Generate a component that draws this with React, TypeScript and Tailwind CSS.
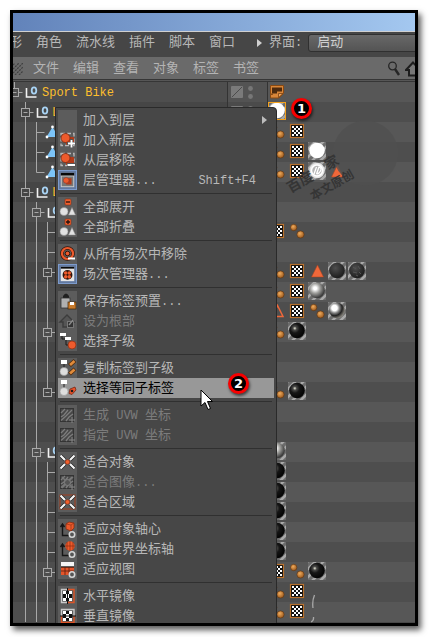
import type { ReactNode } from "react";
import clsx from "clsx";

type IconName =
  | "none" | "layerAdd" | "layerRemove" | "layerManager" | "unfold" | "fold"
  | "takeRemove" | "takeManager" | "preset" | "root" | "children" | "copyTag"
  | "selectTag" | "uvw" | "fitObject" | "fitImage" | "fitRegion" | "axis"
  | "world" | "view" | "mirrorH" | "mirrorV";

type MenuItem = {
  label: string;
  icon: IconName;
  shortcut?: string;
  submenu?: boolean;
  disabled?: boolean;
  active?: boolean;
  framed?: boolean;
};

const menuGroups: MenuItem[][] = [
  [
    { label: "加入到层", icon: "none", submenu: true },
    { label: "加入新层", icon: "layerAdd" },
    { label: "从层移除", icon: "layerRemove" },
    { label: "层管理器...", icon: "layerManager", shortcut: "Shift+F4", framed: true },
  ],
  [
    { label: "全部展开", icon: "unfold" },
    { label: "全部折叠", icon: "fold" },
  ],
  [
    { label: "从所有场次中移除", icon: "takeRemove" },
    { label: "场次管理器...", icon: "takeManager", framed: true },
  ],
  [
    { label: "保存标签预置...", icon: "preset" },
    { label: "设为根部", icon: "root", disabled: true },
    { label: "选择子级", icon: "children" },
  ],
  [
    { label: "复制标签到子级", icon: "copyTag" },
    { label: "选择等同子标签", icon: "selectTag", active: true },
  ],
  [
    { label: "生成 UVW 坐标", icon: "uvw", disabled: true },
    { label: "指定 UVW 坐标", icon: "uvw", disabled: true },
  ],
  [
    { label: "适合对象", icon: "fitObject" },
    { label: "适合图像...", icon: "fitImage", disabled: true },
    { label: "适合区域", icon: "fitRegion" },
  ],
  [
    { label: "适应对象轴心", icon: "axis" },
    { label: "适应世界坐标轴", icon: "world" },
    { label: "适应视图", icon: "view" },
  ],
  [
    { label: "水平镜像", icon: "mirrorH" },
    { label: "垂直镜像", icon: "mirrorV" },
  ],
];

type TagName =
  | "note" | "selected" | "dots" | "checker" | "white" | "ring" | "tri"
  | "triOutline" | "dark" | "rough" | "silver" | "chrome" | "black";

// guides: one character per level. | line, t branch, l last branch, + open node, ^ last node
type TreeRow = { guides: string; kind?: "null" | "poly"; name?: string; tags?: TagName[] };

const rows: TreeRow[] = [
  { guides: "^", kind: "null", name: "Sport Bike", tags: ["note"] },
  { guides: " +", kind: "null", name: "L", tags: ["selected"] },
  { guides: " |t", kind: "poly", tags: ["dots", "checker"] },
  { guides: " |t", kind: "poly", tags: ["dots", "checker", "white"] },
  { guides: " |l", kind: "poly", tags: ["dots", "checker", "ring", "tri"] },
  { guides: " +", kind: "null", name: "L" },
  { guides: " |+", kind: "null" },
  { guides: " ||t", tags: ["checker", "dots"] },
  { guides: " ||t" },
  { guides: " ||+", tags: ["dots", "checker", "tri", "dark", "rough"] },
  { guides: " |||", tags: ["dots", "checker", "silver"] },
  { guides: " |||", tags: ["triOutline", "checker", "dots", "chrome"] },
  { guides: " ||+", tags: ["dots", "black"] },
  { guides: " |||" },
  { guides: " |||" },
  { guides: " ||^", tags: ["dots", "black"] },
  { guides: " ||" },
  { guides: " ||" },
  { guides: " |+", kind: "null", tags: ["silver"] },
  { guides: " ||t", tags: ["black"] },
  { guides: " ||t", tags: ["black"] },
  { guides: " ||t", tags: ["black"] },
  { guides: " ||t", tags: ["black"] },
  { guides: " ||t", tags: ["black"] },
  { guides: " ||+", tags: ["checker", "dots", "black"] },
  { guides: " |||", tags: ["dots", "checker"] },
  { guides: " |||", tags: ["dots", "checker"] },
];

// Latin runs sit one size below the Chinese glyphs
function Mixed({ text }: { text: string }) {
  return (
    <>
      {text.split(/([\x20-\x7e]+)/).map((part, i) =>
        i % 2 ? <span key={i} className="text-[12px]">{part}</span> : part,
      )}
    </>
  );
}

function Guides({ row }: { row: TreeRow }) {
  const last = row.guides.length - 1;
  const nodeX = 1.5 + last * 11;
  const ix = nodeX + (row.kind === "poly" ? 9 : 11);
  const width = 29 + last * 10;
  return (
    <svg width={width} height="20" className="shrink-0 overflow-visible" fill="none" stroke="#a8a8a8">
      {row.guides.split("").map((g, level) => {
        const x = 1.5 + level * 11;
        switch (g) {
          case "|":
            return <path key={level} d={`M${x} 0V20`} />;
          case "t":
            return <path key={level} d={`M${x} 0V20M${x} 10.5H${x + 8}`} />;
          case "l":
            return <path key={level} d={`M${x} 0V10.5H${x + 8}`} />;
          case "+":
          case "^":
            return (
              <g key={level}>
                <path d={`M${x} 0V6M${x + 4} 10.5H${x + 8}M${x - 2} 10.5H${x + 2}`} />
                {g === "+" && <path d={`M${x} 15V20`} />}
                <rect x={x - 4} y="6.5" width="8" height="8" />
              </g>
            );
          default:
            return null;
        }
      })}
      {row.kind === "null" && (
        <g>
          <path d={`M${ix + 1} 6V15H${ix + 11}`} stroke="#f2f2f2" strokeWidth="1.6" />
          <ellipse cx={ix + 8.5} cy="8.5" rx="2.3" ry="3.2" stroke="#a9d4f5" strokeWidth="1.8" />
        </g>
      )}
      {row.kind === "poly" && (
        <g stroke="none">
          <path d={`M${ix + 7} 5L${ix + 13} 15H${ix + 1}Z`} fill="#7cc4f8" />
          <circle cx={ix + 7} cy="5" r="1.4" fill="#fff" />
          <circle cx={ix + 1.5} cy="15" r="1.4" fill="#fff" />
        </g>
      )}
    </svg>
  );
}

const ballFill: Record<string, string> = {
  white: "#fff", selected: "#fff", ring: "#e6e6e6", dark: "url(#ballDark)",
  rough: "url(#ballDark)", silver: "url(#ballSilver)", chrome: "url(#ballChrome)", black: "url(#ballBlack)",
};

function Tag({ name }: { name: TagName }) {
  let art: ReactNode;
  switch (name) {
    case "note":
      art = (
        <g>
          <path d="M3.5 3.5H16.5V11.5L12 16H3.500V12.500H5.500V12H3.500Z" fill="#d98639" stroke="#8a4a12" />
          <path d="M5 5.500H15V9.500H10V11.500H5Z" fill="#4d2a0e" />
          <path d="M11.500 15.500V11.500H16Z" stroke="#7a4313" strokeWidth="0.800" fill="#f0a35a" />
        </g>
      );
      break;
    case "dots":
      art = (
        <g fill="url(#dot)" stroke="#5a3310" strokeWidth="0.6">
          <circle cx="6.7" cy="5.5" r="3.2" />
          <circle cx="13.5" cy="12.5" r="3.6" />
        </g>
      );
      break;
    case "checker":
      art = (
        <g>
          <rect x="3.5" y="2.500" width="13" height="13" fill="#111" stroke="#b9722e" strokeWidth="1.2" />
          <path
            d="M5 4h2v2h-2zM9 4h2v2h-2zM13 4h2v2h-2zM7 6h2v2h-2zM11 6h2v2h-2zM5 8h2v2h-2zM9 8h2v2h-2zM13 8h2v2h-2zM7 10h2v2h-2zM11 10h2v2h-2zM5 12h2v2h-2zM9 12h2v2h-2zM13 12h2v2h-2z"
            fill="#fff"
          />
        </g>
      );
      break;
    case "tri":
      art = <path d="M10.5 3L16.5 15H4.5Z" fill="#f0683a" stroke="#a8401c" strokeWidth="0.5" />;
      break;
    case "triOutline":
      art = <path d="M10.5 3.5L16 14.5H5Z" fill="none" stroke="#f0683a" strokeWidth="1.5" />;
      break;
    default:
      art = (
        <g>
          <rect x="1" y="0" width="18" height="18" fill="url(#hatch)" />
          <circle cx="10" cy="8.5" r="7.8" fill={ballFill[name]} />
          {name === "ring" && <circle cx="10" cy="8.5" r="5.5" fill="#b5b5b5" stroke="#fff" strokeWidth="1.5" />}
          {name === "ring" && <path d="M7 12L9.5 5M9.500 12L12 5Q15 6 13.500 9Q12.500 11.500 9.500 12" stroke="#fff" strokeWidth="1.300" fill="none" />}
          {name === "rough" && <path d="M6 5l3 2M11 4l2 3M6 10l4 1M12 10l2 2M9 13l2 1" stroke="#555" fill="none" />}
          {name === "selected" && <rect x="1.5" y="0.5" width="17" height="17" fill="none" stroke="#f5a21b" />}
        </g>
      );
  }
  return <svg width="20" height="20" className="shrink-0">{art}</svg>;
}

function Gradients() {
  return (
    <svg className="absolute size-0" aria-hidden="true">
      <defs>
        <pattern id="hatch" width="8" height="8" patternUnits="userSpaceOnUse">
          <rect width="8" height="8" fill="#6c6c6c" />
          <path d="M-2 10L10 -2M-2 2L2 -2M6 10L10 6" stroke="#a9a9a9" strokeWidth="2.6" />
        </pattern>
        <radialGradient id="dot" cx="0.4" cy="0.35" r="0.65">
          <stop offset="0" stopColor="#f0ab5c" />
          <stop offset="1" stopColor="#9c5a1e" />
        </radialGradient>
        <radialGradient id="ballDark" cx="0.4" cy="0.35" r="0.65">
          <stop offset="0" stopColor="#4e4e4e" />
          <stop offset="1" stopColor="#1c1c1c" />
        </radialGradient>
        <radialGradient id="ballSilver" cx="0.38" cy="0.36" r="0.62">
          <stop offset="0.15" stopColor="#fff" />
          <stop offset="0.5" stopColor="#a2a29f" />
          <stop offset="1" stopColor="#3b3b3b" />
        </radialGradient>
        <radialGradient id="ballChrome" cx="0.34" cy="0.34" r="0.7">
          <stop offset="0.25" stopColor="#fff" />
          <stop offset="0.45" stopColor="#8a8a8a" />
          <stop offset="0.7" stopColor="#222" />
          <stop offset="1" stopColor="#8a877f" />
        </radialGradient>
        <radialGradient id="ballBlack" cx="0.36" cy="0.36" r="0.6">
          <stop offset="0" stopColor="#e8e8d8" />
          <stop offset="0.2" stopColor="#4a4a48" />
          <stop offset="0.5" stopColor="#161616" />
          <stop offset="1" stopColor="#060606" />
        </radialGradient>
      </defs>
    </svg>
  );
}

const layerBase = (
  <g>
    <path d="M3 3.5H16V15.5H3Z" fill="none" stroke="#b9b9b9" strokeWidth="1.3" strokeDasharray="4 2" />
    <rect x="8" y="7" width="8" height="8" rx="1" fill="#b33a18" />
    <circle cx="7.5" cy="8" r="4.5" fill="#ec5a2c" stroke="#7a2a12" strokeWidth="0.8" />
  </g>
);

const shapes = (
  <g fill="#e2e2e2" stroke="#8d8d8d" strokeWidth="0.5">
    <circle cx="6" cy="14.5" r="4" />
    <path d="M14 10.5L17.5 18H10.5Z" />
  </g>
);

const tagSource = (
  <g>
    <rect x="3" y="2" width="6" height="4" fill="#fff" />
    <path d="M6 6V10" stroke="#222" />
    <circle cx="6" cy="13.5" r="4" fill="#dedede" stroke="#9a9a9a" strokeWidth="0.6" />
  </g>
);

const uvwArt = (
  <g>
    <rect x="2.5" y="3.5" width="13" height="13" fill="#484848" stroke="#343434" />
    <path d="M3 8L7 4M3 12L6 10L10 5M3 15.500L8 11L14 5M8 16L11 12L15 9" stroke="#7d7d7d" strokeWidth="1.3" fill="none" />
    <path d="M14 12V18M11 15H17" stroke="#858585" />
  </g>
);

const fitArrows = (
  <g>
    <path d="M2.5 3.5L7 8M16.5 3.5L12 8M2.5 16.5L7 12M16.5 16.5L12 12" stroke="#202020" strokeWidth="3.4" />
    <path d="M2.5 3.5L7 8M16.5 3.5L12 8M2.5 16.5L7 12M16.5 16.5L12 12" stroke="#f4f4f4" strokeWidth="2.2" />
    <circle cx="9.5" cy="10" r="2.3" fill="#f2602d" stroke="#8b2c10" strokeWidth="0.6" />
  </g>
);

const axisArrows = (
  <path d="M4.5 5V16.5H13M2.5 8L4.5 5L6.5 8" stroke="#161616" strokeWidth="1.4" fill="none" />
);

const gear = <circle cx="14" cy="15.5" r="2.7" fill="#555" stroke="#d4d4d4" strokeWidth="1.6" />;

const mirrorChecks = (
  <g>
    <rect x="5" y="5" width="9" height="10" fill="#111" />
    <path d="M5 5h3v3h-3zM11 5h3v3h-3zM8 8h3v4h-3zM5 12h3v3h-3zM11 12h3v3h-3z" fill="#fff" />
  </g>
);

const menuIcons: Record<IconName, ReactNode> = {
  none: null,
  layerAdd: (
    <g>
      {layerBase}
      <path d="M13.5 9V18M9 13.5H18" stroke="#555" strokeWidth="3" />
      <path d="M13.5 10V17.5M10 13.5H17" stroke="#fff" strokeWidth="1.8" />
    </g>
  ),
  layerRemove: (
    <g>
      {layerBase}
      <path d="M9 15H18" stroke="#555" strokeWidth="4" />
      <path d="M9.5 15H17" stroke="#fff" strokeWidth="2" />
    </g>
  ),
  layerManager: (
    <g>
      <rect x="2" y="2" width="15" height="16" fill="#d0d0d0" />
      <rect x="3" y="6" width="13" height="11" fill="#777" />
      <rect x="2" y="2" width="15" height="3" fill="#080808" />
      <rect x="8" y="8" width="6" height="7" fill="#b33a18" />
      <circle cx="8" cy="10.5" r="3.2" fill="#ec5a2c" stroke="#773333" strokeWidth="0.6" />
    </g>
  ),
  unfold: (
    <g>
      {shapes}
      <rect x="7" y="2" width="6" height="6" rx="1" fill="#f06130" stroke="#8c2d10" strokeWidth="0.6" />
      <path d="M8 5H12" stroke="#27100a" strokeWidth="1.3" />
    </g>
  ),
  fold: (
    <g>
      {shapes}
      <rect x="7" y="2" width="6" height="6" rx="1" fill="#f06130" stroke="#8c2d10" strokeWidth="0.6" />
      <path d="M8 5H12M10 3V7" stroke="#27100a" strokeWidth="1.3" />
    </g>
  ),
  takeRemove: (
    <g>
      <circle cx="9.5" cy="9.5" r="5.5" fill="none" stroke="#35150b" strokeWidth="3.6" />
      <circle cx="9.5" cy="9.5" r="5.5" fill="none" stroke="#ec5a2c" strokeWidth="2.2" />
      <circle cx="9.5" cy="9.5" r="2.3" fill="#ec5a2c" stroke="#35150b" />
      <path d="M10 14.5H17" stroke="#fff" strokeWidth="2" />
    </g>
  ),
  takeManager: (
    <g>
      <rect x="2" y="2" width="15" height="16" fill="#e4e4e4" />
      <rect x="2" y="2" width="15" height="2" fill="#080808" />
      <circle cx="9.5" cy="11" r="5.5" fill="#30130b" />
      <g fill="#ec5a2c">
        <circle cx="7.5" cy="8.8" r="2" />
        <circle cx="11.5" cy="8.8" r="2" />
        <circle cx="7.5" cy="13.2" r="2" />
        <circle cx="11.5" cy="13.2" r="2" />
      </g>
    </g>
  ),
  preset: (
    <g>
      <path d="M5 5Q8 0 11 5V8H5Z" fill="#202020" />
      <rect x="3" y="7" width="9" height="10" fill="#b0b0b0" stroke="#333" strokeWidth="0.8" />
      <rect x="10" y="11" width="8" height="7" fill="#c77a2c" stroke="#402508" strokeWidth="0.7" />
      <rect x="12" y="11" width="4" height="3" fill="#fff" />
    </g>
  ),
  root: (
    <g>
      <path d="M2 11L9 4L16 11H13V16H5V11Z" fill="#555" stroke="#3c3c3c" strokeWidth="1.4" />
      <rect x="9.5" y="10.5" width="6" height="6" fill="#333" stroke="#777" />
      <path d="M11 14L15 9" stroke="#8c8c8c" strokeWidth="1.3" />
    </g>
  ),
  children: (
    <g>
      <path d="M4 5V8H8V14H11" stroke="#1b1b1b" fill="none" />
      <rect x="2" y="2" width="6" height="3" fill="#fff" />
      <rect x="7" y="6" width="6" height="3" fill="#fff" />
      <circle cx="14" cy="14" r="4" fill="#ee5b2d" stroke="#8c2d10" strokeWidth="0.7" />
    </g>
  ),
  copyTag: (
    <g>
      {tagSource}
      <path d="M11.5 7.5L17 2.5M11.5 16L17 11" stroke="#4d2a0e" strokeWidth="4.2" />
      <path d="M12 7L16.5 3M12 15.5L16.5 11.5" stroke="#e08b3b" strokeWidth="2.8" />
    </g>
  ),
  selectTag: (
    <g>
      {tagSource}
      <path d="M11 15.5L12 11L17 9L18 12L14 16.5Z" fill="#e9532a" stroke="#6b1e0c" strokeWidth="0.7" />
      <circle cx="14" cy="13" r="1.3" fill="#1c1c1c" />
    </g>
  ),
  uvw: uvwArt,
  fitObject: fitArrows,
  fitImage: (
    <g>
      {uvwArt}
      <path d="M4 5L15 16M15 5L4 16" stroke="#767676" strokeWidth="1.5" />
      <circle cx="9.5" cy="10.5" r="3" fill="#555" stroke="#808080" />
    </g>
  ),
  fitRegion: (
    <g>
      <rect x="2" y="3" width="15" height="14" fill="none" stroke="#a33c1c" />
      {fitArrows}
    </g>
  ),
  axis: (
    <g>
      {axisArrows}
      <path d="M8 5L11 3L16 4V9L13 12L8 10Z" fill="#ec5a2c" stroke="#8c2d10" strokeWidth="0.8" />
      <path d="M8 5L13 6L16 4M13 6V12" stroke="#8c2d10" strokeWidth="0.6" fill="none" />
      {gear}
    </g>
  ),
  world: (
    <g>
      {axisArrows}
      <circle cx="12" cy="7" r="4.7" fill="#ec5a2c" />
      <path d="M7 7H17M12 2V12M9 3V11M15 3V11" stroke="#8c2d10" strokeWidth="0.7" />
      {gear}
    </g>
  ),
  view: (
    <g>
      <rect x="3" y="3" width="13" height="4" fill="#f4f4f4" />
      <rect x="3" y="8" width="13" height="8" fill="#e4552a" />
      <path d="M3 8.5H16M3 12H16M7 8V16M11 8V16" stroke="#56200f" strokeWidth="0.8" />
      {gear}
    </g>
  ),
  mirrorH: (
    <g>
      <path d="M9 3.5H3.5V16.5H9" fill="none" stroke="#c9c9c9" strokeWidth="1.4" />
      <path d="M10 3.5H16V16.5H10" fill="none" stroke="#df5426" strokeWidth="1.4" />
      {mirrorChecks}
      <path d="M9.5 2V18" stroke="#111" />
    </g>
  ),
  mirrorV: (
    <g>
      <path d="M3.5 10V3.5H16V10" fill="none" stroke="#c9c9c9" strokeWidth="1.4" />
      <path d="M3.5 10V16.5H16V10" fill="none" stroke="#df5426" strokeWidth="1.4" />
      {mirrorChecks}
      <path d="M2 10H18" stroke="#111" />
    </g>
  ),
};

function ContextMenu() {
  return (
    <div
      role="menu"
      className="absolute top-[94px] left-[42px] w-[222px] rounded-tr-sm border border-[#2a2a2a] bg-[#474747] px-px pt-[2px]"
    >
      {menuGroups.map((group, gi) => (
        <div key={gi} role="group">
          {gi > 0 && <hr className="mx-[3px] my-[3px] h-px border-0 bg-[#303030]" />}
          {group.map((item, i) => (
            <button
              key={i}
              type="button"
              role="menuitem"
              disabled={item.disabled}
              className={clsx(
                "mx-px flex h-5 w-[216px] items-center text-left text-[13px] leading-5 whitespace-nowrap",
                item.active ? "bg-[#989898] text-black" : item.disabled ? "text-[#7c7c7c]" : "text-[#b8b8b8]",
              )}
            >
              <span
                className={clsx(
                  "h-5 w-[19px] shrink-0",
                  item.framed ? "border border-[#7d9bcc] bg-[#6279a0]" : !item.active && "bg-[#5c5c5c]",
                )}
              >
                <svg viewBox="0 0 19 20" className="size-full">{menuIcons[item.icon]}</svg>
              </span>
              <span className="ml-[6px] flex-1 pt-[2px]"><Mixed text={item.label} /></span>
              {item.shortcut && <span className="mr-[18px] pt-[2px] text-[12px]">{item.shortcut}</span>}
              {item.submenu && (
                <svg width="5" height="8" className="mr-[7px]"><path d="M0 0L5 4L0 8Z" fill="#bcbcbc" /></svg>
              )}
            </button>
          ))}
        </div>
      ))}
    </div>
  );
}

function Badge({ n, className }: { n: number; className: string }) {
  return (
    <span
      className={clsx(
        "absolute flex size-[21px] items-center justify-center rounded-full border-[3px] border-[#f80000] bg-black font-['DejaVu_Sans',sans-serif] text-[13px] leading-none font-bold text-white shadow-[1px_2px_3px_rgba(0,0,0,0.6)]",
        className,
      )}
    >
      {n}
    </span>
  );
}

export default function App() {
  return (
    <div className="bg-white pt-[10px] pr-[11px] pb-[11px] pl-[10px] font-['Liberation_Mono','Noto_Sans_CJK_SC',monospace]">
      <Gradients />
      <main className="relative overflow-hidden border-[3px] border-black bg-[#474747] pb-px shadow-[3px_4px_6px_rgba(0,0,0,0.65)]">
        <div className="h-[18px] bg-linear-to-r from-[#6283ba] to-[#a4c8f0]" />
        <nav className="flex h-[26px] items-center gap-[14px] border-t border-[#d0d0d0] bg-[#464646] pb-[3px] text-[13px] leading-5 whitespace-nowrap text-[#b8b8b8]">
          <button type="button" className="-ml-1">形</button>
          {["角色", "流水线", "插件", "脚本", "窗口"].map((label) => (
            <button key={label} type="button">{label}</button>
          ))}
          <div className="ml-2 flex min-w-0 flex-1 items-center">
            <svg width="5" height="8" className="shrink-0"><path d="M0 0L5 4L0 8Z" fill="#d0d0d0" /></svg>
            <label htmlFor="layout" className="ml-[7px]"><Mixed text="界面:" /></label>
            <select
              id="layout"
              className="-mr-2 ml-[6px] h-[18px] min-w-0 flex-1 appearance-none rounded-[3px] border border-[#303030] bg-linear-to-b from-[#686868] to-[#545454] pl-2 leading-4 text-[#d0d0d0]"
            >
              <option>启动</option>
            </select>
          </div>
        </nav>
        <div className="flex h-[22px] items-center gap-[14px] bg-[#6a6a6a] pt-[2px] text-[13px] leading-5 whitespace-nowrap text-[#b4b4b4]">
          <svg width="10" height="12" className="-mr-1 shrink-0">
            <path d="M0 2L2 0M0 6L6 0M0 10L10 0M2 12L10 4M6 12L10 8" stroke="#3f3f3f" strokeWidth="1.2" strokeDasharray="2 1" />
          </svg>
          {["文件", "编辑", "查看", "对象", "标签", "书签"].map((label) => (
            <button key={label} type="button">{label}</button>
          ))}
          <div className="ml-auto flex shrink-0 items-center gap-[5px]">
            <button type="button" aria-label="搜索">
              <svg width="13" height="16" fill="none" stroke="#262626" className="block">
                <circle cx="5.5" cy="5" r="3.8" strokeWidth="1.3" />
                <path d="M8 8L12 14" strokeWidth="2.4" />
              </svg>
            </button>
            <button type="button" aria-label="主页" className="w-[10px] overflow-hidden">
              <svg width="16" height="16" className="block">
                <path d="M8 1.5L1 9H4V14.5H12V9H15Z" fill="#777" stroke="#1d1d1d" strokeWidth="2" />
              </svg>
            </button>
          </div>
        </div>
        <div className="h-[3px] border-y border-[#363636] bg-[#565656]" />

        <div className="relative">
          {rows.map((row, i) => (
            <div key={i} className="flex h-5">
              <div
                className={clsx(
                  "flex w-[214px] shrink-0 items-center overflow-hidden text-[12px] leading-5 text-[#fdbf2d]",
                  i % 2 ? "bg-[#464646]" : "bg-[#4e4e4e]",
                )}
              >
                <Guides row={row} />
                <span className="pt-[2px]">{row.name}</span>
              </div>
              <div
                className={clsx(
                  "w-10 shrink-0 border-l border-[#333333]",
                  i % 2 ? "bg-[#4b4b4b]" : "bg-[#535353]",
                )}
              >
                <svg width="30" height="20">
                  <rect x="3" y="4" width="12" height="12" rx="1" fill="#7a7a7a" />
                  <path d="M4 15L14 5" stroke="#4c4c4c" />
                  <circle cx="22.5" cy="6.5" r="2.4" fill="#777" />
                  <circle cx="22.5" cy="14.5" r="2.4" fill="#777" />
                </svg>
              </div>
              <div
                className={clsx(
                  "flex min-w-0 flex-1 shadow-[inset_1px_0_0_#333333]",
                  i % 2 ? "bg-[#4e4e4e]" : "bg-[#575757]",
                )}
              >
                {row.tags?.map((tag, t) => <Tag key={t} name={tag} />)}
              </div>
            </div>
          ))}
        </div>

        {/* Watermark lying over the tag column */}
        <svg width="160" height="110" className="absolute top-[89px] left-[254px] z-10">
          <circle cx="98.5" cy="51" r="32.5" fill="#505050" fillOpacity="0.8" />
          <g transform="rotate(-30 24 92)" fill="#353535" fontSize="14" fontWeight="700">
            <text x="24" y="91">百度</text>
            <text x="68" y="90">家</text>
            <text x="40" y="109" fontSize="12">本文原创</text>
          </g>
        </svg>
        <svg width="6" height="30" className="absolute bottom-0 left-[298px] z-10" fill="none">
          <path d="M3.5 2Q1 8 2 15M2.5 24Q3 28 0 29" stroke="#a8a8a8" strokeWidth="1.3" />
        </svg>

        <div className="absolute inset-0 z-20">
          <ContextMenu />
          <Badge n={1} className="top-[85px] left-[278px]" />
          <Badge n={2} className="top-[360px] left-[215px]" />
          <svg width="14" height="22" className="absolute top-[376px] left-[187px]">
            <path d="M1 1V17L5 13.5L8 20.5L10.500 19.5L7.5 12.5H12.5Z" fill="#fff" stroke="#000" />
          </svg>
        </div>
      </main>
    </div>
  );
}
